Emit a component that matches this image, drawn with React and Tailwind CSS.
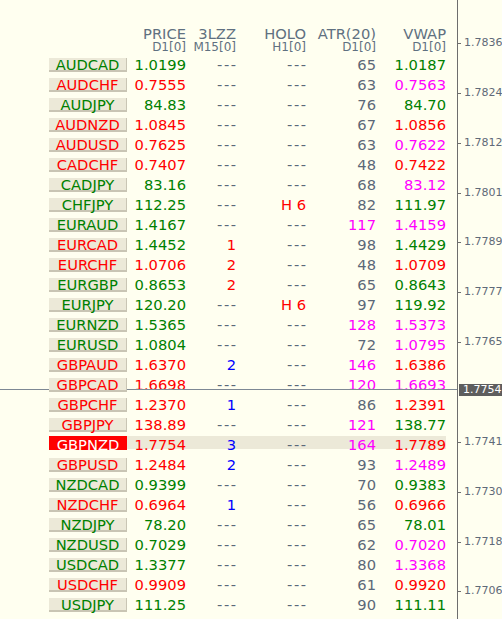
import React from 'react';

const C = {
  g: 'text-[#008000]',
  r: 'text-[#ff0000]',
  m: 'text-[#ff00ff]',
  b: 'text-[#0000ff]',
  n: 'text-[#5b6878]',
};

// pair, pairColor, price, priceColor, lzz, lzzColor, holo, holoColor, atr, atrColor, vwap, vwapColor
const ROWS = [
  ['AUDCAD', 'g', '1.0199', 'g', '---', 'n', '---', 'n', '65', 'n', '1.0187', 'g'],
  ['AUDCHF', 'r', '0.7555', 'r', '---', 'n', '---', 'n', '63', 'n', '0.7563', 'm'],
  ['AUDJPY', 'g', '84.83', 'g', '---', 'n', '---', 'n', '76', 'n', '84.70', 'g'],
  ['AUDNZD', 'r', '1.0845', 'r', '---', 'n', '---', 'n', '67', 'n', '1.0856', 'r'],
  ['AUDUSD', 'r', '0.7625', 'r', '---', 'n', '---', 'n', '63', 'n', '0.7622', 'm'],
  ['CADCHF', 'r', '0.7407', 'r', '---', 'n', '---', 'n', '48', 'n', '0.7422', 'r'],
  ['CADJPY', 'g', '83.16', 'g', '---', 'n', '---', 'n', '68', 'n', '83.12', 'm'],
  ['CHFJPY', 'g', '112.25', 'g', '---', 'n', 'H 6', 'r', '82', 'n', '111.97', 'g'],
  ['EURAUD', 'g', '1.4167', 'g', '---', 'n', '---', 'n', '117', 'm', '1.4159', 'm'],
  ['EURCAD', 'r', '1.4452', 'g', '1', 'r', '---', 'n', '98', 'n', '1.4429', 'g'],
  ['EURCHF', 'r', '1.0706', 'r', '2', 'r', '---', 'n', '48', 'n', '1.0709', 'r'],
  ['EURGBP', 'g', '0.8653', 'g', '2', 'r', '---', 'n', '65', 'n', '0.8643', 'g'],
  ['EURJPY', 'g', '120.20', 'g', '---', 'n', 'H 6', 'r', '97', 'n', '119.92', 'g'],
  ['EURNZD', 'g', '1.5365', 'g', '---', 'n', '---', 'n', '128', 'm', '1.5373', 'm'],
  ['EURUSD', 'g', '1.0804', 'g', '---', 'n', '---', 'n', '72', 'n', '1.0795', 'm'],
  ['GBPAUD', 'r', '1.6370', 'r', '2', 'b', '---', 'n', '146', 'm', '1.6386', 'r'],
  ['GBPCAD', 'r', '1.6698', 'r', '---', 'n', '---', 'n', '120', 'm', '1.6693', 'm'],
  ['GBPCHF', 'r', '1.2370', 'r', '1', 'b', '---', 'n', '86', 'n', '1.2391', 'r'],
  ['GBPJPY', 'r', '138.89', 'r', '---', 'n', '---', 'n', '121', 'm', '138.77', 'g'],
  ['GBPNZD', 'w', '1.7754', 'r', '3', 'b', '---', 'n', '164', 'm', '1.7789', 'r'],
  ['GBPUSD', 'r', '1.2484', 'r', '2', 'b', '---', 'n', '93', 'n', '1.2489', 'm'],
  ['NZDCAD', 'g', '0.9399', 'g', '---', 'n', '---', 'n', '70', 'n', '0.9383', 'g'],
  ['NZDCHF', 'r', '0.6964', 'r', '1', 'b', '---', 'n', '56', 'n', '0.6966', 'r'],
  ['NZDJPY', 'g', '78.20', 'g', '---', 'n', '---', 'n', '65', 'n', '78.01', 'g'],
  ['NZDUSD', 'g', '0.7029', 'g', '---', 'n', '---', 'n', '62', 'n', '0.7020', 'm'],
  ['USDCAD', 'g', '1.3377', 'g', '---', 'n', '---', 'n', '80', 'n', '1.3368', 'm'],
  ['USDCHF', 'r', '0.9909', 'r', '---', 'n', '---', 'n', '61', 'n', '0.9920', 'r'],
  ['USDJPY', 'g', '111.25', 'g', '---', 'n', '---', 'n', '90', 'n', '111.11', 'g'],
];

const AXIS = ['1.7836', '1.7824', '1.7812', '1.7801', '1.7789', '1.7777', '1.7765', null, '1.7741', '1.7730', '1.7718', '1.7706'];

function Cell({ v, c, w }) {
  return (
    <div className={`${w} text-right ${C[c]}`}>
      {v === '---' ? <span className="mr-[-1.5px] tracking-[1.5px]">---</span> : v}
    </div>
  );
}

function Row({ r }) {
  const sel = r[1] === 'w';
  return (
    <div className="flex h-[20px]">
      <div className="w-[49px] shrink-0" />
      {sel ? (
        <div className="relative z-10 mt-[1px] flex h-[14px] w-[78px] shrink-0 justify-center bg-[#ff0000] leading-[18px] text-white">
          {r[0]}
        </div>
      ) : (
        <div
          className={`relative z-10 mt-[3px] flex h-[14px] w-[78px] shrink-0 justify-center border-r border-b-2 border-[#c9c5b4] bg-[#ece9d8] leading-[14px] ${C[r[1]]}`}
        >
          {r[0]}
        </div>
      )}
      <div className={`mt-[1px] flex h-[13px] leading-[18px] ${sel ? 'bg-[#ece9d8]' : ''}`}>
        <Cell v={r[2]} c={r[3]} w="w-[59px]" />
        <Cell v={r[4]} c={r[5]} w="w-[50px]" />
        <Cell v={r[6]} c={r[7]} w="w-[70px]" />
        <Cell v={r[8]} c={r[9]} w="w-[70px]" />
        <Cell v={r[10]} c={r[11]} w="w-[70px]" />
      </div>
    </div>
  );
}

function Head({ top, sub, w }) {
  return (
    <div className={`${w} text-right text-[#607080]`}>
      <div className="h-[14px] text-[14.7px] leading-[12px] pt-[1px]">{top}</div>
      <div className="text-[12px] leading-[12px]">{sub}</div>
    </div>
  );
}

export default function App() {
  return (
    <div className="relative flex h-[619px] w-[502px] overflow-hidden bg-[#fffff0] font-['DejaVu_Sans',sans-serif] text-[14.7px]">
      {/* price line */}
      <div className="absolute left-0 top-[389px] h-px w-[457px] bg-[#7d8894]" />

      {/* table */}
      <div className="w-[457px] shrink-0 pt-[27px]">
        <div className="flex h-[28px]">
          <div className="w-[127px] shrink-0" />
          <Head top="PRICE" sub="D1[0]" w="w-[59px]" />
          <Head top="3LZZ" sub="M15[0]" w="w-[50px]" />
          <Head top="HOLO" sub="H1[0]" w="w-[70px]" />
          <Head top="ATR(20)" sub="D1[0]" w="w-[70px]" />
          <Head top="VWAP" sub="D1[0]" w="w-[70px]" />
        </div>
        <div className="flex flex-col">
          {ROWS.map((r) => (
            <Row key={r[0]} r={r} />
          ))}
        </div>
      </div>

      {/* price axis */}
      <div className="relative flex-1 border-l border-[#6e6e6e] text-[11px] leading-[14px]">
        {AXIS.map((v, i) => {
          const y = Math.round(43 + i * 49.85);
          if (!v) return null;
          return (
            <div key={v} className="absolute left-0 flex items-center" style={{ top: y - 7 }}>
              <div className="h-px w-[3px] bg-[#6e6e6e]" />
              <span className="ml-[3px] h-[14px] text-[#5f6a78]">{v}</span>
            </div>
          );
        })}
        <div className="absolute left-[1px] top-[384px] flex h-[12px] w-[44px] items-center whitespace-nowrap bg-[#5e5e5e] pl-[4px] leading-[12px] text-white">
          1.7754
        </div>
      </div>
    </div>
  );
}
